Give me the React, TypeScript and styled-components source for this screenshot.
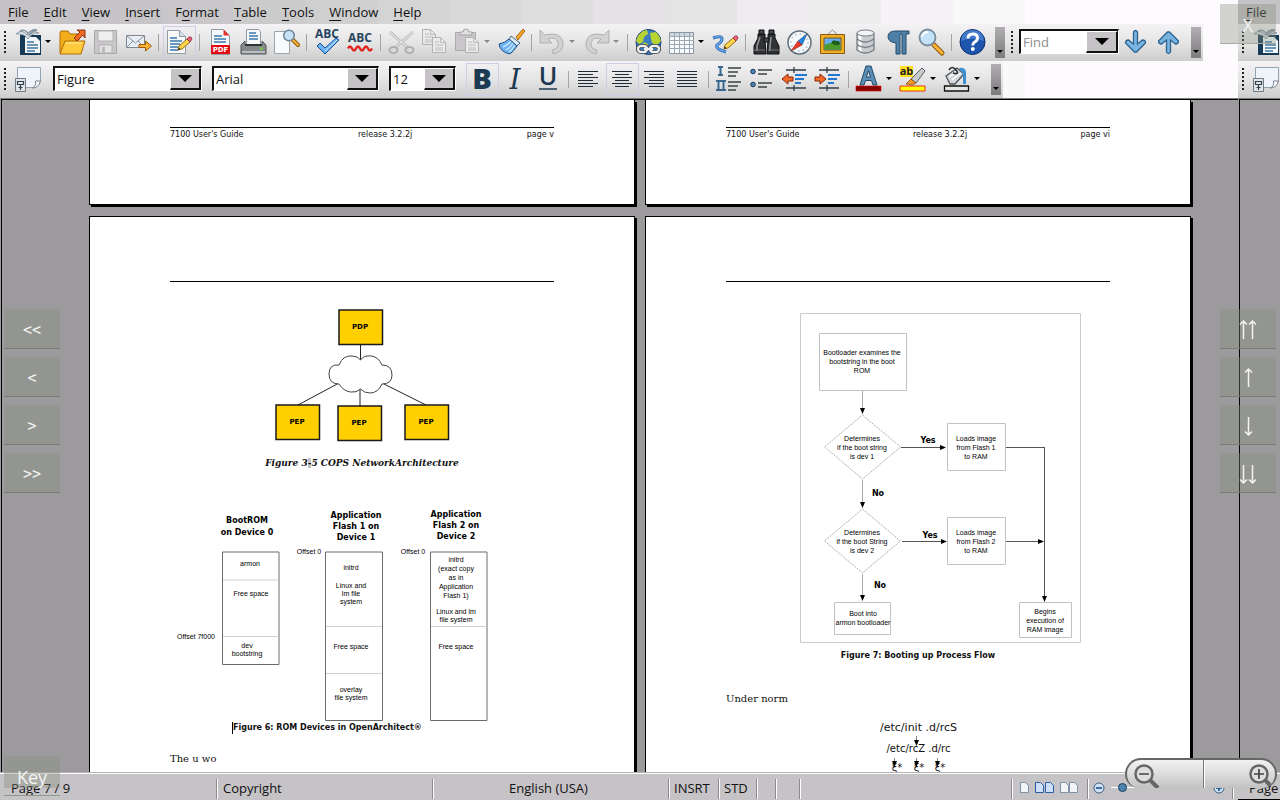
import React from "react";
import styled, { createGlobalStyle, css } from "styled-components";

const Global = createGlobalStyle`
  * { box-sizing: border-box; }
  body { margin: 0; background: #9c9a9c; font-family: "Open Sans", "Noto Sans", sans-serif; font-size: 13px; color: #111; }
  button, select, input { font: inherit; color: inherit; margin: 0; }
`;

const Screen = styled.div`
  position: relative;
  display: grid;
  grid-template-columns: minmax(0, 1fr) 42px;
  height: 100vh;
  overflow: hidden;
`;
const Window = styled.main`
  display: flex;
  flex-direction: column;
  min-width: 0;
  min-height: 0;
  overflow: hidden;
`;
const NextWindow = styled(Window).attrs({ as: "section" })``;

const Header = styled.header`
  flex: none;
  border-bottom: 1px solid #7b797b;
  background: linear-gradient(
    to right,
    #c4c2c4 0 89px, #c6c4c6 89px 161px, #c8c6c8 161px 233px, #cccbcc 233px 305px,
    #d0cfd0 305px 377px, #d5d4d5 377px 449px, #d9d9d9 449px 521px, #dedede 521px 593px,
    #e5e1e5 593px 665px, #e4e4e4 665px 737px, #efebef 737px 809px, #ededed 809px 881px,
    #f6f2f6 881px 953px, #f9f9f9 953px 1025px, #fefbfe 1025px
  );
`;
const NextHeader = styled(Header)`
  background: #c6c3c6;
`;
const MenuBar = styled.nav`
  display: flex;
  align-items: center;
  height: 24px;
  padding-left: 8px;
  gap: 15px;
`;
const MenuItem = styled.button`
  border: 0;
  padding: 0;
  background: none;
  line-height: 24px;
  white-space: nowrap;
  u { text-underline-offset: 3px; }
`;

const ToolRow = styled.div`
  display: flex;
  height: 37px;
`;
const ToolBar = styled.div`
  display: flex;
  align-items: center;
  height: 37px;
  padding-left: 4px;
  padding-right: 2px;
  background: linear-gradient(#f4f2f4, #e6e5e6 50%, #cecdce);
`;
const Grip = styled.span`
  width: 2px;
  height: 23px;
  margin-right: 6px;
  background: repeating-linear-gradient(#222 0 2px, transparent 2px 4px);
`;
const Tool = styled.button<{ $on?: boolean }>`
  display: grid;
  place-items: center;
  width: 33px;
  height: 33px;
  padding: 0;
  border: 1px solid ${(p) => (p.$on ? "#cfcde8" : "transparent")};
  background: none;
  svg { display: block; overflow: visible; }
`;
const More = styled.button<{ $dim?: boolean }>`
  display: flex;
  align-items: center;
  width: 11px;
  height: 33px;
  padding: 0 0 2px;
  border: 0;
  background: none;
  &::after {
    content: "";
    border: 3px solid transparent;
    border-top-color: ${(p) => (p.$dim ? "#8a898a" : "#000")};
    border-bottom: 0;
  }
`;
const Rule = styled.span`
  width: 1px;
  height: 17px;
  margin: 0 4px 0 3px;
  background: #a5a3a5;
`;
const Overflow = styled.button`
  display: flex;
  align-items: flex-end;
  justify-content: center;
  width: 10px;
  height: 31px;
  margin-left: 6px;
  padding: 0 0 5px;
  border: 0;
  background: linear-gradient(#b0aeb0, #7e7c7e);
  &::after {
    content: "";
    border: 3px solid transparent;
    border-top-color: #000;
    border-bottom: 0;
  }
`;

const comboFrame = css`
  height: 25px;
  margin-bottom: 2px;
  border: 1px solid #fff;
  border-top: 2px solid #111;
  border-left: 2px solid #111;
  background: #fff;
`;
const Combo = styled.label<{ $w: number }>`
  ${comboFrame}
  display: grid;
  grid-template-columns: 1fr 31px;
  width: ${(p) => p.$w}px;
  margin-right: 10px;
`;
const Select = styled.select`
  grid-area: 1 / 1 / 2 / 3;
  width: 100%;
  border: 0;
  padding: 0 0 0 2px;
  appearance: none;
  background: none;
  outline: none;
`;
const DropFace = styled.span`
  grid-area: 1 / 2;
  display: grid;
  place-items: center;
  border: 1px solid #fff;
  border-right: 2px solid #111;
  border-bottom: 2px solid #111;
  background: #c6c3c6;
  &::after {
    content: "";
    border: 7px solid transparent;
    border-top-color: #000;
    border-bottom: 0;
  }
`;
const FindBox = styled.div`
  ${comboFrame}
  display: grid;
  grid-template-columns: 1fr 32px;
  width: 100px;
`;
const FindInput = styled.input`
  width: 100%;
  min-width: 0;
  border: 0;
  padding: 0 0 0 2px;
  background: none;
  outline: none;
  &::placeholder { color: #8e8c8e; opacity: 1; }
`;
const DropButton = styled(DropFace).attrs({ as: "button" })`
  padding: 0;
`;
const PickerGroup = styled.div`
  display: flex;
  padding-left: 8px;
`;

const Canvas = styled.div`
  flex: 1;
  display: flex;
  flex-direction: column;
  gap: 11px;
  min-height: 0;
  margin-left: 1px;
  padding: 0 47px 0 87px;
  overflow: hidden;
  border-top: 1px solid #000;
  border-left: 1px solid #000;
  background: #9c9a9c;
`;
const Spread = styled.div<{ $fill?: boolean }>`
  display: flex;
  gap: 10px;
  flex: ${(p) => (p.$fill ? "1 0 auto" : "none")};
`;
const Sheet = styled.article<{ $tail?: boolean }>`
  flex: 1 1 0;
  min-width: 0;
  padding: ${(p) => (p.$tail ? "27px 80px 64px" : "64px 80px 0")};
  border: 1px solid #000;
  ${(p) => p.$tail && "border-top: 0;"}
  background: #fff;
  box-shadow: 2px 2px 0 #000;
`;
const PageFooter = styled.footer`
  display: flex;
  justify-content: space-between;
  padding-top: 1px;
  border-top: 1px solid #000;
  font: 8px/11px "DejaVu Sans", sans-serif;
`;
const HeadLine = styled.div`
  height: 1px;
  background: #000;
`;
const Figure = styled.figure<{ $top: number }>`
  display: flex;
  flex-direction: column;
  align-items: center;
  margin: ${(p) => p.$top}px 0 0;
  svg { display: block; flex: none; }
`;
const SerifCaption = styled.figcaption`
  margin-top: 8px;
  font: italic bold 9px/18px "DejaVu Serif", serif;
  white-space: nowrap;
`;
const FieldMark = styled.span`
  background: #c6c3c6;
`;
const Caption = styled.figcaption<{ $lead?: boolean }>`
  font: bold 8px/12px "DejaVu Sans", sans-serif;
  white-space: nowrap;
  ${(p) => (p.$lead ? "align-self: flex-start; margin-left: 62px; border-left: 1px solid #000;" : "margin-top: 5px;")}
`;
const Para = styled.p<{ $top: number }>`
  margin: ${(p) => p.$top}px 0 0;
  font: 10px/16px "DejaVu Serif", serif;
`;

const Status = styled.footer`
  flex: none;
  display: flex;
  align-items: center;
  height: 28px;
  border-top: 1px solid #b5b2b5;
  box-shadow: inset 0 1px 0 #fff;
  padding: 4px 4px 0 0;
  background: #c6c3c6;
  white-space: nowrap;
`;
const NextStatus = styled(Status)`
  border-bottom: 1px solid #000;
  padding: 3px 0 0 11px;
`;
const Cell = styled.div<{ $w?: number; $center?: boolean; $pad?: number }>`
  display: flex;
  align-items: center;
  justify-content: ${(p) => (p.$center ? "center" : "flex-start")};
  flex: ${(p) => (p.$w ? `none` : "1")};
  ${(p) => p.$w && `width: ${p.$w}px;`}
  height: 20px;
  padding: 0 ${(p) => (p.$center ? 6 : 0)}px 2px ${(p) => p.$pad ?? 0}px;
  border-right: 1px solid #fff;
  box-shadow: inset -1px 0 0 #8c8a8c;
`;
const ViewButton = styled.button`
  display: grid;
  place-items: center;
  height: 20px;
  padding: 0;
  border: 0;
  margin-right: 5px;
  background: none;
`;
const ZoomRange = styled.input`
  width: 96px;
  height: 16px;
  margin: 0 6px;
  appearance: none;
  background: linear-gradient(#fff, #fff) center / 100% 1px no-repeat;
  &::-webkit-slider-thumb {
    appearance: none;
    width: 9px;
    height: 9px;
    border: 1px solid #1b3d5c;
    border-radius: 50%;
    background: #4d83ae;
  }
`;

const Pad = styled.div<{ $side: "left" | "right" }>`
  position: absolute;
  top: 309px;
  ${(p) => (p.$side === "left" ? "left: 4px;" : "right: 4px;")}
  display: flex;
  flex-direction: column;
  gap: 8px;
`;
const PadButton = styled.button`
  display: grid;
  place-items: center;
  width: 56px;
  height: 40px;
  padding: 2px 0 0;
  border: 0;
  border-bottom: 1px solid #7b7d78;
  background: rgba(134, 142, 126, 0.36);
  color: #f4f4f4;
  font: 15px/20px "DejaVu Sans Mono", monospace;
`;
const CloseButton = styled(PadButton)`
  position: absolute;
  top: 4px;
  right: 4px;
  border-bottom-color: #a9aba6;
  font: 18px/20px "Open Sans", sans-serif;
`;
const KeyButton = styled(PadButton)`
  position: absolute;
  left: 4px;
  bottom: 4px;
  border-bottom-color: #8e9a8c;
  background: linear-gradient(rgba(134, 142, 126, 0.4), rgba(134, 142, 126, 0.4)) top / 100% 32px no-repeat;
  font: 18px/20px "Open Sans", sans-serif;
`;
const Zoomer = styled.div`
  position: absolute;
  right: 3px;
  bottom: 12px;
  display: grid;
  grid-template-columns: 76px 1fr;
  width: 152px;
  height: 30px;
  overflow: hidden;
  border: 2px solid #666;
  border-bottom: 0;
  border-radius: 17px 17px 15px 15px;
  background: linear-gradient(#f2f2f2, #dcdcdc 50%, #c2c2c2);
`;
const ZoomHalf = styled.button<{ $end?: boolean }>`
  display: flex;
  justify-content: ${(p) => (p.$end ? "flex-end" : "flex-start")};
  padding: 2px 0 0 5px;
  border: 0;
  ${(p) => p.$end && "border-left: 1px solid #777; box-shadow: inset 1px 0 0 #fff; padding: 2px 0 0;"}
  background: none;
`;

const Ic = ({ children, w = 27 }: { children: React.ReactNode; w?: number }) => (
  <svg width={w} height={27} viewBox={`0 0 ${w} 27`} fill="none" aria-hidden="true">{children}</svg>
);

const sheetBlue = "#3a78ac";

const NewDoc = () => (
  <Ic>
    <path d="M5 6h21v20H5z" fill="#173a56" />
    <path d="M10 8h11l4 4v12H10z" fill="#f3f7fa" />
    <path d="M12 13h7M12 16h11M12 19h11M12 22h8" stroke="#41779f" strokeWidth="1.300" />
    <path d="M1 5c4-4 8-3 11 1 3-4 7-4 12-2-5 0-8 2-11 6-3-4-6-5-12-5z" fill="#d5dde3" stroke="#6d7f8c" strokeWidth=".7" />
    <path d="M5 2c4-2 7 0 8 3 2-3 5-5 9-4-4 1-6 3-8 6" stroke="#8797a3" strokeWidth="1.4" />
  </Ic>
);
const Open = () => (
  <Ic>
    <path d="M1 24V4l1-2h7l2 3h9v6" fill="#f2ae1c" stroke="#b06a05" />
    <path d="M1 25 6 12h20l-4 13z" fill="#ffc93c" stroke="#b06a05" />
    <path d="M7 14h16" stroke="#ffe9a0" />
    <path d="m15 9 6-6-3-2h8v8l-2-3-6 6z" fill="#ef6c22" stroke="#7f2705" strokeWidth=".9" />
  </Ic>
);
const Save = () => (
  <Ic>
    <path d="M2.500 1.500h22v23h-22z" fill="#c9c7c9" stroke="#a9a7a9" />
    <path d="M6 2h15v10H6z" fill="#efeeef" stroke="#b5b3b5" />
    <path d="M7 16h13v8H7z" fill="#e4e3e4" stroke="#b0aeb0" />
    <path d="M10 18h3v6h-3z" fill="#bcbabc" />
  </Ic>
);
const Mail = () => (
  <Ic>
    <path d="M1.500 6.500h18v12h-18z" fill="#e8eef4" stroke="#7b8894" />
    <path d="m2 7 8.500 7L19 7M2 18l6-6M19 18l-6-6" stroke="#8796a3" />
    <path d="M14 15.500h6.500V12l6 5-6 5v-3.500H14z" fill="#ffb52e" stroke="#9a5a06" />
  </Ic>
);
const Pencil = ({ x = 0, y = 0 }: { x?: number; y?: number }) => (
  <g transform={`translate(${x} ${y})`}>
    <path d="m0 13 1-4 8-7 3 3-8 7z" fill="#ffd54a" stroke="#8b5a0c" strokeWidth=".9" />
    <path d="m9 2 2-2h2l1 2-2 3z" fill="#f0617c" stroke="#93293f" strokeWidth=".8" />
    <path d="m0 13 .6-2.400L2.500 12z" fill="#222" />
  </g>
);
const EditDoc = () => (
  <Ic>
    <path d="M1.500 1.500h12l6 6v17h-18z" fill="#f6f8fa" stroke="#8f9aa4" />
    <path d="M13.500 1.500v6h6" fill="#d9e0e6" stroke="#8f9aa4" />
    <path d="M4 9h7M4 12h12M4 15h10M4 18h8M4 21h8" stroke={sheetBlue} strokeWidth="1.300" />
    <Pencil x={12} y={8} />
  </Ic>
);
const Pdf = () => (
  <Ic>
    <path d="M4.500.5h12l6 6v19h-18z" fill="#f6f8fa" stroke="#8f9aa4" />
    <path d="M16.500.5 22.500 6.500h-6z" fill="#e8332a" />
    <path d="M7 7h8M7 10h12M7 13h12" stroke={sheetBlue} strokeWidth="1.300" />
    <path d="M4 16h19v9H4z" fill="#e20d12" />
    <text x="13.500" y="23" textAnchor="middle" fontFamily="DejaVu Sans, sans-serif" fontWeight="bold" fontSize="7" fill="#fff">PDF</text>
  </Ic>
);
const Print = () => (
  <Ic>
    <path d="M6.500.5h12l2 2v13h-14z" fill="#f6f8fa" stroke="#8f9aa4" />
    <path d="M9 4h7M9 7h9M9 10h9" stroke={sheetBlue} strokeWidth="1.300" />
    <path d="m1 16 4-4v4h17v-4l4 4v9H1z" fill="#83898d" stroke="#4e5458" />
    <path d="M5 15h17v2H5z" fill="#2e3336" />
    <path d="M2 22h23v2H2z" fill="#b9bec1" />
    <circle cx="21.500" cy="19.500" r="1.300" fill="#66e01f" />
  </Ic>
);
const Preview = () => (
  <Ic>
    <path d="M1.500 2.500h15v22h-15z" fill="#f9fafb" stroke="#9aa4ad" />
    <path d="m20 11 5 5" stroke="#8f560b" strokeWidth="4" strokeLinecap="round" />
    <path d="m20 11 5 5" stroke="#ffb637" strokeWidth="2" strokeLinecap="round" />
    <circle cx="16" cy="6.500" r="5.300" fill="#c6e2f6" stroke="#6f8496" strokeWidth="1.500" />
  </Ic>
);
const Abc = ({ y }: { y: number }) => (
  <text x="13" y={y} textAnchor="middle" fontFamily="Open Sans, sans-serif" fontWeight="bold" fontSize="12" fill="#264660">ABC</text>
);
const Spell = () => (
  <Ic>
    <Abc y={9} />
    <path d="m3 17 3-3 5 5L22 9l3 2-14 14z" fill="#66b4f4" stroke="#164f92" />
    <path d="m11 22 12-11" stroke="#cbe7ff" />
  </Ic>
);
const AutoSpell = () => (
  <Ic>
    <Abc y={13} />
    <path d="M1 19.500q2-4 4 0t4 0 4 0 4 0 4 0 4 0" stroke="#e3231c" strokeWidth="2.500" />
  </Ic>
);
const Cut = () => (
  <Ic>
    <path d="m2 3 18 16M25 3 7 19" stroke="#b5b3b5" strokeWidth="3" />
    <path d="m2 3 18 16M25 3 7 19" stroke="#e2e1e2" strokeWidth="1.500" />
    <ellipse cx="5.500" cy="21" rx="4" ry="3" stroke="#b0aeb0" strokeWidth="2" />
    <ellipse cx="21.500" cy="21" rx="4" ry="3" stroke="#b0aeb0" strokeWidth="2" />
  </Ic>
);
const dimSheet = (x: number, y: number) => (
  <g transform={`translate(${x} ${y})`}>
    <path d="M.5.5h8l5 5v10H.5z" fill="#ecebec" stroke="#b3b1b3" />
    <path d="M8.500.5v5h5M3 5h4M3 8h8M3 11h8M3 13h8" stroke="#bbb9bb" />
  </g>
);
const Copy = () => <Ic>{dimSheet(1, 0)}{dimSheet(11, 8)}</Ic>;
const Paste = () => (
  <Ic>
    <path d="M1.500 3.500h20v18h-20z" fill="#c9c7c9" stroke="#acaaac" />
    <path d="M6 6V3h3q0-3 3-3t3 3h3v3z" fill="#e0dfe0" stroke="#a5a3a5" />
    {dimSheet(11, 8)}
  </Ic>
);
const Brush = () => (
  <Ic>
    <path d="m18 8 7-8 2 2-7 9z" fill="#f6a623" stroke="#8f560b" strokeWidth=".8" />
    <path d="m13 7 9 7-3 3L11 10z" fill="#dfe9f2" stroke="#476a88" />
    <path d="M11 10q-4 4-10 5 1 8 11 10 4-3 7-8z" fill="#6fb4f2" stroke="#1d4f8c" />
    <path d="M13 12q-3 4-8 6M15 14q-3 5-7 7M17 16q-3 5-6 7" stroke="#d4eaff" strokeWidth="1.200" />
  </Ic>
);
const undoPath = "M1 1v13h12l-4-4q8-3 10 4 1 6-6 7l1 4q11-2 10-12Q21 2 6 6z";
const Undo = () => <Ic><path d={undoPath} fill="#d3d2d3" stroke="#b1afb1" /></Ic>;
const Redo = () => <Ic><path d={undoPath} transform="translate(27 0) scale(-1 1)" fill="#d3d2d3" stroke="#b1afb1" /></Ic>;
const Globe = () => (
  <Ic>
    <circle cx="13.500" cy="13" r="12.500" fill="#3c7cc0" stroke="#183f70" />
    <path d="M3 7q4-6 9-6l1 4-4 3-1 5-4 2-3-3zM15 4l6-1q4 4 5 9l-4 4-5-2-1-4zM9 13l4 2-2 5-4-2z" fill="#b8d432" />
    <g stroke="#2c343a" strokeWidth="4"><rect x="3" y="17" width="9" height="6" rx="3" /><rect x="15" y="17" width="9" height="6" rx="3" /></g>
    <g stroke="#eef1f3" strokeWidth="2.400"><rect x="3" y="17" width="9" height="6" rx="3" /><rect x="15" y="17" width="9" height="6" rx="3" /><path d="M9 20h9" /></g>
  </Ic>
);
const TableIcon = () => (
  <Ic>
    <path d="M1.500 3.500h24v21h-24z" fill="#fafbfc" stroke="#8b97a2" />
    <path d="M2 4h23v3H2z" fill="#cfd8e0" />
    <path d="M1 7.500h25M1 11.500h25M1 15.500h25M1 19.500h25M6.500 4v20M11.500 4v20M16.500 4v20M21.500 4v20" stroke="#9ba8b4" />
  </Ic>
);
const DrawIcon = () => (
  <Ic>
    <path d="M1 9q9-3 9 1 0 3-5 6-2 4 9 7" stroke="#2868b4" strokeWidth="3" />
    <path d="M1 9q9-3 9 1 0 3-5 6-2 4 9 7" stroke="#6fb1ee" strokeWidth="1.200" />
    <Pencil x={12} y={7} />
  </Ic>
);
const Binoculars = () => (
  <Ic>
    <path d="M5 5h7v6l1 14H1V17L5 9zM15 5h7v4l4 8v8H14l1-14z" fill="#303234" stroke="#0e0f10" />
    <path d="M6 1h5v4H6zM16 1h5v4h-5zM11 9h5v4h-5z" fill="#45484b" stroke="#0e0f10" />
    <path d="M7 8 4 17v5M18 8l-1 9v5" stroke="#96999c" strokeWidth="1.500" />
    <path d="M1 21h11M15 21h11" stroke="#707477" />
  </Ic>
);
const Compass = () => (
  <Ic>
    <circle cx="13.500" cy="13.500" r="11.500" fill="#f6f9fb" stroke="#5e6f7d" strokeWidth="1.500" />
    <circle cx="13.500" cy="13.500" r="8.500" stroke="#9db0bf" strokeWidth="2" strokeDasharray="1 3.450" />
    <path d="m21 5-5 11-4-4z" fill="#2484de" stroke="#12457f" strokeWidth=".6" />
    <path d="m5 22 7-10 4 4z" fill="#ef3a2d" stroke="#8c150d" strokeWidth=".6" />
  </Ic>
);
const Gallery = () => (
  <Ic>
    <path d="m8 6 5.500-5L19 6" stroke="#8b8e91" />
    <path d="M1.500 5.500h24v19h-24z" fill="#edae28" stroke="#8a5b0a" />
    <path d="M5 9h17v12H5z" fill="#69aef0" stroke="#7b5210" />
    <path d="M5.500 16q7-4 16-1v5.500h-16z" fill="#4b9a2b" />
    <path d="M12 14q2-4 5-2 4-1 4 3-3 3-9-1z" fill="#1f5c19" />
  </Ic>
);
const Database = () => (
  <Ic>
    <path d="M5 4v17q8 6 17 0V4z" fill="#c9cdd0" />
    <path d="M8 5v18" stroke="#fff" strokeWidth="3" />
    <path d="M5 4v17q8 6 17 0V4M5 10q8 6 17 0M5 15.500q8 6 17 0" stroke="#777d82" strokeWidth="1.300" />
    <ellipse cx="13.500" cy="4" rx="8.500" ry="3" fill="#f3f4f5" stroke="#777d82" />
  </Ic>
);
const Pilcrow = () => (
  <Ic>
    <path d="M24 2v3h-3v20h-4V5h-2v20h-4V14Q3 13 3 7.500 3 2 11 2z" fill="#4f81a8" stroke="#234a6b" />
  </Ic>
);
const ZoomIcon = () => (
  <Ic>
    <path d="m16 16 8 8" stroke="#8f560b" strokeWidth="5" strokeLinecap="round" />
    <path d="m16 16 8 8" stroke="#ffb637" strokeWidth="3" strokeLinecap="round" />
    <circle cx="9.500" cy="8.500" r="8" fill="#c4e3f8" stroke="#788c9c" strokeWidth="1.800" />
    <path d="M4 8q1-5 6-5" stroke="#fff" strokeWidth="2" />
  </Ic>
);
const Help = () => (
  <Ic>
    <circle cx="13.500" cy="13" r="12.500" fill="#1d55ad" stroke="#0d2f70" />
    <path d="M2 12Q3 1 13.500 1T25 12Q14 7 2 12z" fill="#5d92dd" opacity=".6" />
    <path d="M9 9.500q0-4.500 4.800-4.500t4.700 4q0 2.500-2.800 4-1.900 1-1.900 3.500" stroke="#fff" strokeWidth="3" />
    <circle cx="13.800" cy="20" r="2" fill="#fff" />
  </Ic>
);
const StyleIcon = () => (
  <Ic>
    <path d="M2.500 1.500h23v14l-7 6h-16z" fill="#eef4f9" stroke="#94a3b0" />
    <path d="M25.500 15h-5q1 5-3 7 6 0 8-7z" fill="#fff" stroke="#77838e" />
    <path d="M.5 12.500h10v13H.5z" fill="#dfe4e8" stroke="#6d7983" />
    <path d="M2.500 15.500h6v3h-6zM5.500 18v6M3.500 21.500h4" stroke="#34424e" strokeWidth="1.200" />
  </Ic>
);
const Letter = ({ c, italic, bold, line }: { c: string; italic?: boolean; bold?: boolean; line?: boolean }) => (
  <Ic>
    <text x="13" y={line ? 19 : 23} textAnchor="middle" fontFamily={italic ? "DejaVu Serif, serif" : "Open Sans, sans-serif"}
      fontSize={line ? 25 : italic ? 28 : 29} fontWeight={bold ? 800 : line ? 600 : 400} fontStyle={italic ? "italic" : "normal"} fill="#1c3a52">{c}</text>
    {line && <path d="M4 23h18" stroke="#1c3a52" strokeWidth="1.500" />}
  </Ic>
);
const rows = [4, 7, 10, 13, 16, 19];
const Align = ({ kind }: { kind: "left" | "center" | "right" | "full" }) => (
  <Ic>
    {rows.map((y, i) => {
      const w = kind === "full" || i % 2 === 0 ? 20 : kind === "center" ? 14 : 15;
      const x = kind === "center" ? 13 - w / 2 : kind === "right" ? 22 - w : 2;
      return <rect key={y} x={x} y={y + 1} width={w} height="1" fill="#1f2c38" />;
    })}
  </Ic>
);
const NumList = () => (
  <Ic>
    <path d="M2 1h5M2 9h5M4.500 1v8M0 15h10M0 24h10M2.500 15v9M7.500 15v9" stroke="#386890" strokeWidth="2" />
    <path d="M12 2h13M12 6h10M12 10h8M12 16h13M12 20h10M12 24h8" stroke="#39443f" strokeWidth="1.300" />
  </Ic>
);
const Bullets = () => (
  <Ic>
    <circle cx="4" cy="5.500" r="2.300" fill="#4a83b4" stroke="#173a56" />
    <circle cx="4" cy="18.500" r="2.300" fill="#4a83b4" stroke="#173a56" />
    <path d="M9 4h14M9 8h9M9 17h14M9 21h9" stroke="#39443f" strokeWidth="1.400" />
  </Ic>
);
const Indent = ({ inc }: { inc?: boolean }) => (
  <Ic>
    <path d="M4 4h20M4 22h20M12 1v6M12 19v6" stroke="#333e48" strokeWidth="1.300" />
    <path d="M13 9h12M13 13h9M13 17h6" stroke="#2278cf" strokeWidth="2" />
    <path d={inc ? "M0 11h5V8l6 5-6 5v-3H0z" : "M11 11H6V8l-6 5 6 5v-3h5z"} fill="#f26a2c" stroke="#8b2304" />
  </Ic>
);
const FontColor = () => (
  <Ic>
    <path d="M4 19 10 0h5l6 19h-4l-1.500-4.500h-6L8 19zm6.500-8h4l-2-6.500z" fill="#5c8db4" stroke="#234a6b" />
    <path d="M0 20h25v5H0z" fill="#850000" stroke="#d00" strokeWidth=".6" />
  </Ic>
);
const Highlight = () => (
  <Ic>
    <path d="M0 0h13v11H0z" fill="#ffdd1f" />
    <text x="6.500" y="9" textAnchor="middle" fontFamily="Open Sans, sans-serif" fontSize="11" fontWeight="bold" fill="#222">ab</text>
    <path d="m11 13 11-11 3 3-9 12z" fill="#c8cbce" stroke="#595e62" />
    <path d="m11 13 5 4-4 2-6-1z" fill="#f2982e" stroke="#8a4f0b" strokeWidth=".8" />
    <path d="M0 20h25v5H0z" fill="#ff0" stroke="#e00" strokeWidth=".8" />
  </Ic>
);
const Fill = () => (
  <Ic>
    <path d="m2 10 11-8 7 6-9 10H6z" fill="#d3d7da" stroke="#4e565c" strokeWidth="1.300" />
    <path d="m5 11 9-6M8 14l9-7" stroke="#fff" strokeWidth="1.500" />
    <path d="M15 2q6-1 7 4v12h-3V9z" fill="#3f8fd0" />
    <path d="M5 4q3-5 7 0t-3 3" stroke="#23292d" strokeWidth="1.500" />
    <path d="M.5 20h24v5H.5z" fill="#e7e7e4" stroke="#111" strokeWidth="1.300" />
  </Ic>
);
const BlueArrow = ({ up }: { up?: boolean }) => (
  <Ic>
    <path transform={up ? "translate(0 26) scale(1 -1)" : undefined}
      d="M11.500 3q2-3 4 0v12l5-4q3 0 3 3l-9 9h-2l-9-9q0-3 3-3l5 4z" fill="#7ab4e0" stroke="#2c648f" strokeWidth="1.300" />
  </Ic>
);

type Entry = "|" | "v" | "d" | [string, React.ReactNode, boolean?];
const standard: Entry[] = [
  ["New", <NewDoc />], "v", ["Open", <Open />], ["Save", <Save />], ["E-mail", <Mail />], "|",
  ["Edit file", <EditDoc />, true], "|", ["Export as PDF", <Pdf />], ["Print", <Print />], ["Page preview", <Preview />], "|",
  ["Spellcheck", <Spell />], ["AutoSpellcheck", <AutoSpell />], "|",
  ["Cut", <Cut />], ["Copy", <Copy />], ["Paste", <Paste />], "d", ["Format paintbrush", <Brush />], "|",
  ["Undo", <Undo />], "d", ["Redo", <Redo />], "d", "|",
  ["Hyperlink", <Globe />], ["Table", <TableIcon />], "v", ["Draw functions", <DrawIcon />], "|",
  ["Find and replace", <Binoculars />], ["Navigator", <Compass />], ["Gallery", <Gallery />], ["Data sources", <Database />],
  ["Nonprinting characters", <Pilcrow />], ["Zoom", <ZoomIcon />], "|", ["Help", <Help />],
];
const formatting: Entry[] = [
  ["Bold", <Letter c="B" bold />, true], ["Italic", <Letter c="I" italic />], ["Underline", <Letter c="U" line />], "|",
  ["Align left", <Align kind="left" />], ["Centered", <Align kind="center" />, true], ["Align right", <Align kind="right" />],
  ["Justified", <Align kind="full" />], "|",
  ["Numbering", <NumList />], ["Bullets", <Bullets />], ["Decrease indent", <Indent />], ["Increase indent", <Indent inc />], "|",
  ["Font color", <FontColor />], "v", ["Highlighting", <Highlight />], "v", ["Background color", <Fill />], "v",
];
const Tools = ({ list }: { list: Entry[] }) => (
  <>
    {list.map((e, i) =>
      e === "|" ? <Rule key={i} /> :
      e === "v" || e === "d" ? <More key={i} $dim={e === "d"} aria-label="More options" /> :
      <Tool key={i} $on={e[2]} aria-label={e[0]}>{e[1]}</Tool>
    )}
  </>
);
const Picker = ({ label, value, w }: { label: string; value: string; w: number }) => (
  <Combo $w={w}>
    <DropFace />
    <Select aria-label={label} defaultValue={value}><option>{value}</option></Select>
  </Combo>
);

const Lines = ({ x, y, step, rows, head }: { x: number; y: number; step: number; rows: string[]; head?: boolean }) => (
  <g textAnchor="middle" fontFamily={head ? "DejaVu Sans, sans-serif" : "Liberation Sans, sans-serif"} fontSize={head ? 8 : 7} fontWeight={head ? "bold" : "normal"} fill="#000">
    {rows.map((r, i) => <text key={i} x={x} y={y + i * step}>{r}</text>)}
  </g>
);

const boxes: [number, number, string][] = [[339, 310, "PDP"], [276, 405, "PEP"], [338, 406, "PEP"], [405, 405, "PEP"]];
const CopsDiagram = () => (
  <svg width="384" height="142" viewBox="170 304 384 142" fill="none" role="img" aria-label="COPS network">
    <path d="M360.500 345v15M339 383l-41 22M360 389v17M382 383l44 22" stroke="#222" />
    <path d="M339 365q4-10 13-9 6 0 8.500 4 3-5 11-4 7 1 10.500 9 10 0 10 10 0 9-10 9-4 9-12 9-6 0-9.500-4-4 4-10 3-7-1-11.500-8-10 0-10-10t10-9z" fill="#fff" stroke="#444" />
    {boxes.map(([x, y, t], i) => (
      <g key={i}>
        <rect x={x} y={y} width="43.500" height="34.500" fill="#ffcf00" stroke="#1a1a1a" strokeWidth="1.500" />
        <text x={x + 21} y={y + 19} textAnchor="middle" fontFamily="DejaVu Sans, sans-serif" fontWeight="bold" fontSize="7" fill="#000">{t}</text>
      </g>
    ))}
  </svg>
);
const RomDiagram = () => (
  <svg width="384" height="216" viewBox="170 506 384 216" fill="none" role="img" aria-label="ROM devices">
    <g stroke="#6b6b6b">
      <path d="M222.500 552h56.500v112.500h-56.500zM325.500 552h57v168.500h-57zM430.500 552h56.500v168.500h-56.500z" />
      <path d="M223 580h56M223 636.500h56M326 626.500h56M326 673.500h56M431 626.500h56" stroke="#d0d0d0" />
    </g>
    <Lines head x={247} y={523} step={12} rows={["BootROM", "on Device 0"]} />
    <Lines head x={356} y={518} step={11} rows={["Application", "Flash 1 on", "Device 1"]} />
    <Lines head x={456} y={517} step={11} rows={["Application", "Flash 2 on", "Device 2"]} />
    <Lines x={250} y={566} step={9} rows={["armon"]} />
    <Lines x={251} y={596} step={9} rows={["Free space"]} />
    <Lines x={247} y={648} step={8} rows={["dev", "bootstring"]} />
    <Lines x={196} y={639} step={9} rows={["Offset 7f000"]} />
    <Lines x={309} y={554} step={9} rows={["Offset 0"]} />
    <Lines x={413} y={554} step={9} rows={["Offset 0"]} />
    <Lines x={351} y={570} step={9} rows={["initrd"]} />
    <Lines x={351} y={588} step={8} rows={["Linux and", "lm file", "system"]} />
    <Lines x={351} y={649} step={9} rows={["Free space"]} />
    <Lines x={351} y={692} step={8} rows={["overlay", "file system"]} />
    <Lines x={456} y={562} step={9} rows={["initrd", "(exact copy", "as in", "Application", "Flash 1)"]} />
    <Lines x={456} y={614} step={8} rows={["Linux and lm", "file system"]} />
    <Lines x={456} y={649} step={9} rows={["Free space"]} />
  </svg>
);
const down = (x: number, y: number) => `M${x - 2.5} ${y - 6}h5l-2.500 6z`;
const right = (x: number, y: number) => `M${x - 6} ${y - 2.5}v5l6-2.500z`;
const BootDiagram = () => (
  <svg width="384" height="333" viewBox="726 312 384 333" fill="none" role="img" aria-label="Booting up flow chart">
    <path d="M800.500 313.500h280v329h-280z" stroke="#ccc" />
    <path d="M819.500 333.500h87v57h-87zM947.500 423.500h58v47h-58zM947.500 517.500h58v47h-58zM834.500 602.500h56v32h-56zM1019.500 602.500h52v35h-52z" stroke="#c2c2c2" />
    <path d="m862.500 415 38 32-38 32-38-32zM862.500 509l38 32-38 32-38-32z" stroke="#b0b0b0" strokeDasharray="2 1" />
    <path d="M862.500 391v22M862.500 480v27M862.500 574v26" stroke="#aaa" />
    <path d="M901 447.500h44M902 541.500h43M1006 447.500h38.500M1006 541.500h37M1044.500 447v152" stroke="#555" />
    <path d={[down(862.5, 414), down(862.5, 508), down(862.5, 601), down(1044.5, 602), right(946, 447.5), right(947, 541.5), right(1044, 541.5)].join("")} fill="#000" />
    <Lines x={862} y={355} step={9} rows={["Bootloader examines the", "bootstring in the boot", "ROM"]} />
    <Lines x={862} y={441} step={9} rows={["Determines", "if the boot string", "is dev 1"]} />
    <Lines x={862} y={535} step={9} rows={["Determines", "if the boot String", "is dev 2"]} />
    <Lines x={976} y={441} step={9} rows={["Loads image", "from Flash 1", "to RAM"]} />
    <Lines x={976} y={535} step={9} rows={["Loads image", "from Flash 2", "to RAM"]} />
    <Lines x={863} y={616} step={9} rows={["Boot into", "armon bootloader"]} />
    <Lines x={1045} y={614} step={9} rows={["Begins", "execution of", "RAM image"]} />
    <Lines head x={928} y={443} step={9} rows={["Yes"]} />
    <Lines head x={930} y={538} step={9} rows={["Yes"]} />
    <Lines head x={878} y={496} step={9} rows={["No"]} />
    <Lines head x={880} y={588} step={9} rows={["No"]} />
  </svg>
);
const RcDiagram = () => (
  <svg width="384" height="60" viewBox="726 718 384 60" fill="none" role="img" aria-label="Init scripts">
    <g fontFamily="DejaVu Sans, sans-serif" fontSize="10" fill="#111" textAnchor="middle">
      <text x="918.500" y="731" fontSize="11">/etc/init .d/rcS</text>
      <text x="918.500" y="752">/etc/rcZ .d/rc</text>
      <text x="897" y="771">ξ*</text>
      <text x="919" y="771">ξ*</text>
      <text x="940" y="771">ξ*</text>
    </g>
    <path d="M916.500 736v7M894.500 758v6M916.500 758v6M937.500 758v6" stroke="#888" />
    <path d={[down(916.5, 746), down(894.5, 767), down(916.5, 767), down(937.5, 767)].join("")} fill="#000" />
  </svg>
);

const pageIcon = (x: number, on?: boolean, w = 8) => (
  <path key={x} d={`M${x + 0.5} 1.500h${w - 3}l3 3v7h-${w}z`} fill={on ? "#cfe0fa" : "#f2f5f8"} stroke={on ? "#2a5ca8" : "#7e90a4"} />
);
const Sign = ({ plus }: { plus?: boolean }) => (
  <svg width="12" height="12" viewBox="0 0 12 12" fill="none" aria-hidden="true">
    <circle cx="6" cy="6" r="5" fill="#cfe3f4" stroke="#3c5f80" />
    <path d={plus ? "M3 6h6M6 3v6" : "M3 6h6"} stroke="#174f88" strokeWidth="1.600" />
  </svg>
);
const Lens = ({ plus }: { plus?: boolean }) => (
  <svg width="28" height="27" viewBox="0 0 28 27" fill="none" aria-hidden="true">
    <path d="m17 17 9 9" stroke="#666" strokeWidth="4" />
    <circle cx="12" cy="12" r="8.500" fill="#dedede" stroke="#666" strokeWidth="2.500" />
    <path d={plus ? "M7 12h10M12 7v10" : "M7 12h10"} stroke="#444" strokeWidth="1.700" />
  </svg>
);
const PadArrow = ({ n, flip }: { n: number; flip?: boolean }) => (
  <svg width="20" height="22" viewBox="0 0 20 22" fill="none" aria-hidden="true">
    <g transform={flip ? "translate(0 22) scale(1 -1)" : undefined} stroke="#f4f4f4" strokeWidth="1.500">
      {(n === 2 ? [5.5, 14.5] : [10.5]).map((x) => <path key={x} d={`M${x} 2v18M${x - 3.5} 5.500l3.500-3.500 3.500 3.500`} />)}
    </g>
  </svg>
);

const menus = ["File", "Edit", "View", "Insert", "Format", "Table", "Tools", "Window", "Help"];
const MenuEntry = ({ name, at = 0 }: { name: string; at?: number }) => (
  <MenuItem>{name.slice(0, at)}<u>{name[at]}</u>{name.slice(at + 1)}</MenuItem>
);

export default function App() {
  return (
    <Screen>
      <Global />
      <Window>
        <Header>
          <MenuBar>{menus.map((m) => <MenuEntry key={m} name={m} at={m === "Format" ? 1 : 0} />)}</MenuBar>
          <ToolRow>
            <ToolBar><Grip /><Tools list={standard} /><Overflow aria-label="More buttons" /></ToolBar>
            <ToolBar>
              <Grip />
              <FindBox><FindInput placeholder="Find" aria-label="Find" /><DropButton aria-label="Recent searches" /></FindBox>
              <Tool aria-label="Find next"><BlueArrow /></Tool>
              <Tool aria-label="Find previous"><BlueArrow up /></Tool>
              <Overflow aria-label="More find buttons" />
            </ToolBar>
          </ToolRow>
          <ToolRow>
            <ToolBar>
              <Grip />
              <Tool aria-label="Styles and formatting"><StyleIcon /></Tool>
              <PickerGroup>
                <Picker label="Paragraph style" value="Figure" w={149} />
                <Picker label="Font name" value="Arial" w={167} />
                <Picker label="Font size" value="12" w={67} />
              </PickerGroup>
              <Tools list={formatting} />
              <Overflow aria-label="More formatting buttons" />
            </ToolBar>
          </ToolRow>
        </Header>

        <Canvas>
          <Spread>
            <Sheet $tail><PageFooter><span>7100 User's Guide</span><span>release 3.2.2j</span><span>page v</span></PageFooter></Sheet>
            <Sheet $tail><PageFooter><span>7100 User's Guide</span><span>release 3.2.2j</span><span>page vi</span></PageFooter></Sheet>
          </Spread>
          <Spread $fill>
            <Sheet>
              <HeadLine />
              <Figure $top={22}>
                <CopsDiagram />
                <SerifCaption>Figure 3<FieldMark>-</FieldMark>5 COPS NetworkArchitecture</SerifCaption>
              </Figure>
              <Figure $top={34}>
                <RomDiagram />
                <Caption $lead>Figure 6: ROM Devices in OpenArchitect®</Caption>
              </Figure>
              <Para $top={17}>The u wo</Para>
            </Sheet>
            <Sheet>
              <HeadLine />
              <Figure $top={30}>
                <BootDiagram />
                <Caption>Figure 7: Booting up Process Flow</Caption>
              </Figure>
              <Para $top={29}>Under norm</Para>
              <Figure $top={11}><RcDiagram /></Figure>
            </Sheet>
          </Spread>
        </Canvas>

        <Status>
          <Cell $w={218} $pad={11}>Page 7 / 9</Cell>
          <Cell $w={216} $pad={5}>Copyright</Cell>
          <Cell $w={236} $center>English (USA)</Cell>
          <Cell $w={50} $pad={4}>INSRT</Cell>
          <Cell $w={38} $pad={4}>STD</Cell>
          <Cell $w={19} />
          <Cell $w={24} />
          <Cell />
          <Cell $w={76} $pad={6}>
            <ViewButton aria-label="Single page"><svg width="11" height="13" viewBox="0 0 11 13">{pageIcon(1)}</svg></ViewButton>
            <ViewButton aria-label="Two pages"><svg width="20" height="13" viewBox="0 0 20 13">{pageIcon(0, true)}{pageIcon(10, true)}</svg></ViewButton>
            <ViewButton aria-label="Book view"><svg width="18" height="13" viewBox="0 0 18 13">{pageIcon(0)}{pageIcon(9)}</svg></ViewButton>
          </Cell>
          <Cell $w={145} $pad={4}>
            <Sign />
            <ZoomRange type="range" defaultValue={8} aria-label="Zoom" />
            <Sign plus />
          </Cell>
        </Status>
      </Window>

      <NextWindow>
        <NextHeader>
          <MenuBar><MenuEntry name="File" /></MenuBar>
          <ToolRow><ToolBar><Grip /><Tool aria-label="New"><NewDoc /></Tool></ToolBar></ToolRow>
          <ToolRow><ToolBar><Grip /><Tool aria-label="Styles"><StyleIcon /></Tool></ToolBar></ToolRow>
        </NextHeader>
        <Canvas />
        <NextStatus>Page</NextStatus>
      </NextWindow>

      <CloseButton>X</CloseButton>
      <Pad $side="left">
        {["<<", "<", ">", ">>"].map((t) => <PadButton key={t}>{t}</PadButton>)}
      </Pad>
      <Pad $side="right">
        <PadButton aria-label="Top"><PadArrow n={2} /></PadButton>
        <PadButton aria-label="Up"><PadArrow n={1} /></PadButton>
        <PadButton aria-label="Down"><PadArrow n={1} flip /></PadButton>
        <PadButton aria-label="Bottom"><PadArrow n={2} flip /></PadButton>
      </Pad>
      <KeyButton>Key</KeyButton>
      <Zoomer>
        <ZoomHalf aria-label="Zoom out"><Lens /></ZoomHalf>
        <ZoomHalf $end aria-label="Zoom in"><Lens plus /></ZoomHalf>
      </Zoomer>
    </Screen>
  );
}
